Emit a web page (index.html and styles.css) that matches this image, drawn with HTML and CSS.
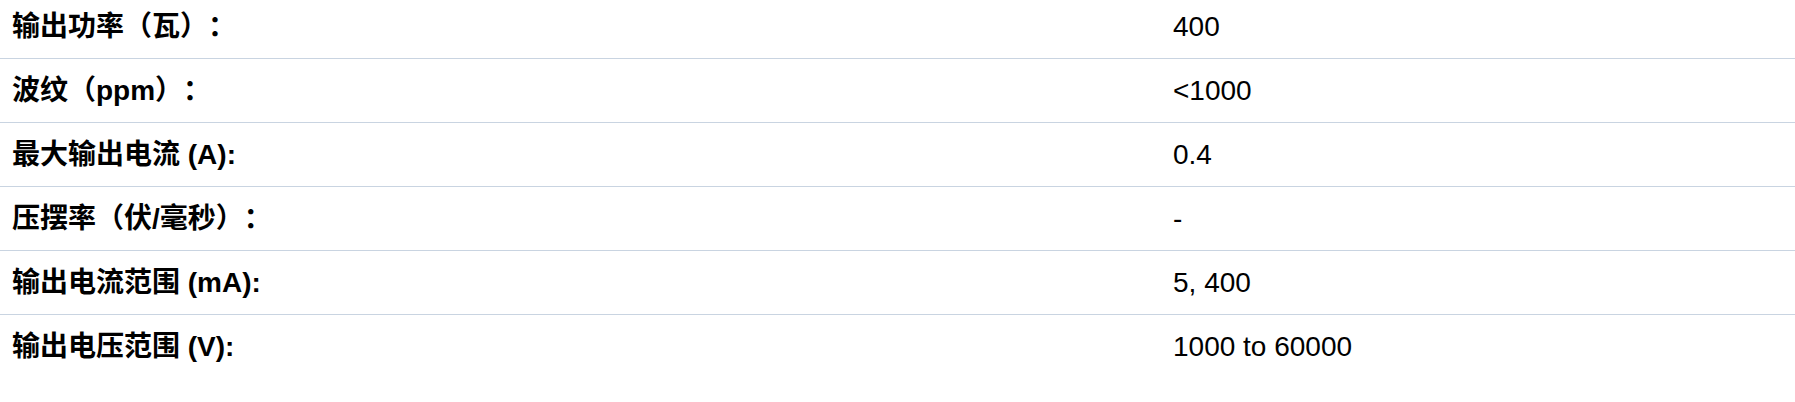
FILE: index.html
```html
<!DOCTYPE html>
<html lang="zh-CN">
<head>
<meta charset="utf-8">
<title>参数</title>
<link rel="stylesheet" href="styles.css">
</head>
<body>
<div class="specs">
  <div class="row"><div class="label">输出功率（瓦）：</div><div class="value">400</div></div>
  <div class="row"><div class="label">波纹（ppm）：</div><div class="value">&lt;1000</div></div>
  <div class="row"><div class="label">最大输出电流 (A):</div><div class="value">0.4</div></div>
  <div class="row"><div class="label">压摆率（伏/毫秒）：</div><div class="value">-</div></div>
  <div class="row"><div class="label">输出电流范围 (mA):</div><div class="value">5, 400</div></div>
  <div class="row"><div class="label">输出电压范围 (V):</div><div class="value">1000 to 60000</div></div>
</div>
</body>
</html>
```
FILE: styles.css
```css
html, body {
  margin: 0;
  padding: 0;
  background: #ffffff;
}
body {
  font-family: "Liberation Sans", "Noto Sans CJK SC", sans-serif;
  color: #000000;
  font-size: 28px;
  text-spacing-trim: space-all;
}
.specs {
  margin-top: -5px;
}
.row {
  display: grid;
  grid-template-columns: 1161px 1fr;
  align-items: center;
  height: 63px;
  border-bottom: 1px solid #c9d4e1;
}
.row:last-child {
  border-bottom: none;
}
.label {
  padding-left: 12px;
  font-weight: bold;
  line-height: 40px;
}
.value {
  padding-left: 12px;
  line-height: 40px;
}
```
